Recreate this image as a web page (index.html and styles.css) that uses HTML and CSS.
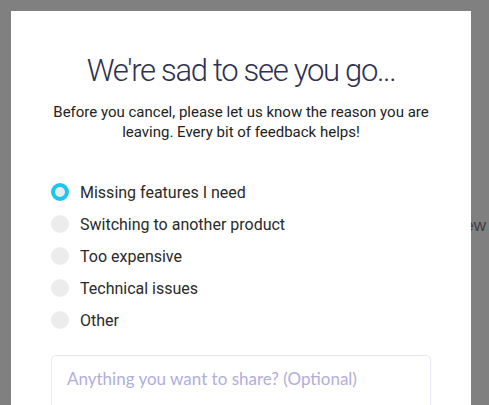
FILE: index.html
```html
<html>

<head>
  <title>Cancel subscription</title>
  <link rel="stylesheet" href="styles.css">
</head>

<body>

  <div class="page">
    <p class="page-text">Account overview</p>
  </div>

  <div class="modal">
    <h2 class="title">We're sad to see you go...</h2>
    <p class="subtitle">Before you cancel, please let us know the reason you are leaving. Every bit of feedback helps!</p>

    <form class="reasons">
      <label class="reason">
        <input type="radio" name="reason" checked>
        <span>Missing features I need</span>
      </label>
      <label class="reason">
        <input type="radio" name="reason">
        <span>Switching to another product</span>
      </label>
      <label class="reason">
        <input type="radio" name="reason">
        <span>Too expensive</span>
      </label>
      <label class="reason">
        <input type="radio" name="reason">
        <span>Technical issues</span>
      </label>
      <label class="reason">
        <input type="radio" name="reason">
        <span>Other</span>
      </label>

      <textarea class="feedback" placeholder="Anything you want to share? (Optional)" autofocus></textarea>
    </form>
  </div>

</body>

</html>
```

FILE: styles.css
```css
* {
  margin: 0;
  padding: 0;
  box-sizing: border-box;
}

body {
  background: #808080;
  font-family: Roboto, "Liberation Sans", sans-serif;
  height: 100vh;
  overflow: hidden;
}

.page {
  display: flex;
  justify-content: flex-end;
  padding-top: 216px;
  padding-right: 3px;
}

.page-text {
  font-family: "Liberation Sans", Arial, sans-serif;
  font-size: 17px;
  color: #3c3f4a;
}

.modal {
  position: absolute;
  top: 11px;
  left: 11px;
  width: 460px;
  height: 420px;
  background: #fff;
  padding: 41px 40px 0;
}

.title {
  font-weight: 300;
  font-size: 31px;
  line-height: 38px;
  color: #2e3150;
  text-align: center;
  letter-spacing: -1.3px;
}

.subtitle {
  margin-top: 12px;
  font-size: 15px;
  line-height: 20px;
  color: #222;
  text-align: center;
}

.reasons {
  margin-top: 34px;
  display: flex;
  flex-direction: column;
}

.reason {
  display: flex;
  align-items: center;
  gap: 11px;
  height: 32px;
  font-size: 16px;
  color: #2a2a2a;
  cursor: pointer;
}

.reason input {
  appearance: none;
  width: 18px;
  height: 18px;
  border-radius: 50%;
  background: #ececec;
  margin-top: -1px;
}

.reason input:checked {
  border: 4px solid #1ac6f2;
}

.feedback {
  margin-top: 19px;
  width: 380px;
  height: 80px;
  border: 1px solid #e8e6fa;
  border-radius: 5px;
  padding: 12px 15px;
  font-family: Lato, "Open Sans", sans-serif;
  font-size: 17px;
  color: #444;
  caret-color: #5a4fa8;
  resize: none;
  outline: none;
}

.feedback::placeholder {
  color: #b0aedb;
}
```
